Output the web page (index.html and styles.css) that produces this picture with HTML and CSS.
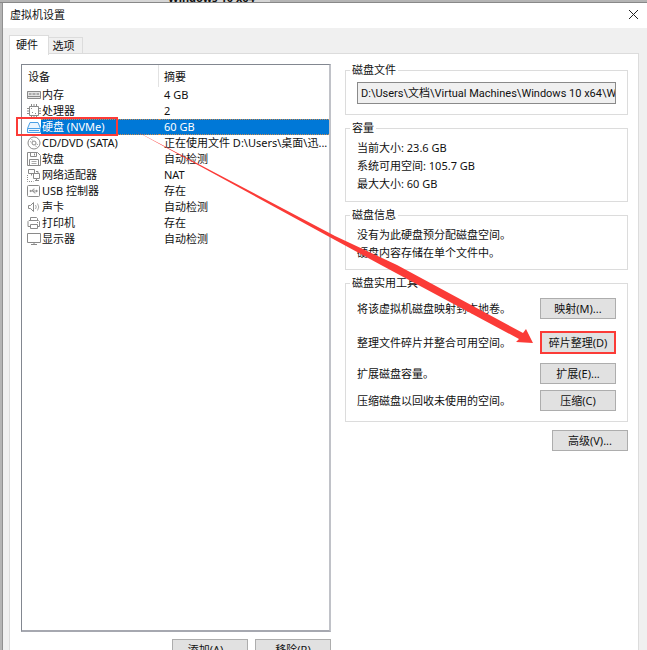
FILE: index.html
```html
<!DOCTYPE html>
<html lang="zh-CN">
<head>
<meta charset="utf-8">
<title>虚拟机设置</title>
<link rel="stylesheet" href="styles.css">
</head>
<body>
<div class="desktop">
  <div class="backdrop" aria-hidden="true"><span class="backdrop-tab">Windows 10 x64</span></div>
  <main class="dialog">
    <header class="titlebar">
      <h1>虚拟机设置</h1>
      <button class="close" type="button" aria-label="关闭">
        <svg width="11" height="11" viewBox="0 0 11 11"><path d="M1 1l9 9M10 1l-9 9"/></svg>
      </button>
    </header>
    <div class="tabs" role="tablist">
      <button class="tab active" type="button" role="tab" aria-selected="true">硬件</button>
      <button class="tab" type="button" role="tab" aria-selected="false">选项</button>
    </div>
    <section class="panel">
      <div class="left">
        <div class="list">
          <table>
            <thead><tr><th class="name">设备</th><th>摘要</th></tr></thead>
            <tbody>
              <tr><td><div class="device"><svg viewBox="0 0 14 14"><path class="fill" d="M0 3h14v7h-14z"/><path d="M.5 3.5h13v7h-13zM.5 8.500h13"/><path class="light" d="M2 5.500h2.500M5.500 5.500h3M9.500 5.500h2.500M2 6.500h2.500M5.500 6.500h3M9.500 6.500h2.500"/></svg><span>内存</span></div></td><td>4 GB</td></tr>
              <tr><td><div class="device"><svg viewBox="0 0 14 14"><path d="M2.5 2.5h9v9h-9zM4.5 0v2M7 0v2M9.500 0v2M4.500 12v2M7 12v2M9.500 12v2M0 4.500h2M0 7h2M0 9.500h2M12 4.500h2M12 7h2M12 9.500h2"/><path d="M4 4.500h1M5 8.500h1M8 9.500h1"/></svg><span>处理器</span></div></td><td>2</td></tr>
              <tr class="selected"><td><div class="device"><svg viewBox="0 0 14 14"><path class="disk" d="M3 2.500h8l2.500 6v4h-13v-4z"/><path class="disk-line" d="M.5 8.500h13M2 10.500h10"/></svg><span>硬盘 (NVMe)</span><i class="mark"></i></div></td><td>60 GB</td></tr>
              <tr><td><div class="device"><svg viewBox="0 0 14 14"><circle cx="7" cy="7" r="6"/><circle cx="7" cy="7" r="2"/><path class="light" d="M3 5.500l1.500.7M9.500 8l1.500.7M4.500 3l1 1.500M8.500 9.500l1 1.500"/></svg><span>CD/DVD (SATA)</span></div></td><td>正在使用文件 D:\Users\桌面\迅...</td></tr>
              <tr><td><div class="device"><svg viewBox="0 0 14 14"><path d="M.5.5h10l3 3v10h-13zM3.500 .5v4h6v-4M7.500 1.500v2M2.500 13.500v-6h9v6"/><path class="light" d="M4.500 9.500h5M4.500 11.500h5"/></svg><span>软盘</span></div></td><td>自动检测</td></tr>
              <tr><td><div class="device"><svg viewBox="0 0 14 14"><path d="M1.500 1.500h6v4h-6zM4.500 5.500v2M6.500 5.500h6v5h-6zM8 12.500h4M9.500 10.500v2M9 3.500h2v2"/><path class="dotted" d="M.5 7v6.500h6"/></svg><span>网络适配器</span></div></td><td>NAT</td></tr>
              <tr><td><div class="device"><svg viewBox="0 0 14 14"><rect x=".5" y="1.500" width="12" height="11" rx="1"/><path d="M3 7h7M5 7l1.500-2h1M6 7l1.500 2h1M9 6l1.500 1l-1.500 1"/><circle cx="3.500" cy="7" r=".6"/></svg><span>USB 控制器</span></div></td><td>存在</td></tr>
              <tr><td><div class="device"><svg viewBox="0 0 14 14"><path d="M1.500 5.500h2l3-3v9l-3-3h-2z"/><path class="light" d="M8.500 5q1.500 2 0 4M10.500 3.500q2.500 3.500 0 7"/></svg><span>声卡</span></div></td><td>自动检测</td></tr>
              <tr><td><div class="device"><svg viewBox="0 0 14 14"><path d="M3.500 4.500v-3h6l1 1v2M3.500 10.500h-2.500v-5l1-1h9.500l1 1v5h-2M3.500 8.500h7v4h-7zM10 6.500h1"/></svg><span>打印机</span></div></td><td>存在</td></tr>
              <tr><td><div class="device"><svg viewBox="0 0 14 14"><path d="M.5 1.500h13v9h-13zM4 12.500h6M7 10.500v2"/></svg><span>显示器</span></div></td><td>自动检测</td></tr>
            </tbody>
          </table>
        </div>
        <div class="list-actions">
          <button class="btn" type="button">添加(A)...</button>
          <button class="btn" type="button">移除(R)</button>
        </div>
      </div>
      <div class="right">
        <fieldset class="file">
          <legend>磁盘文件</legend>
          <input type="text" readonly aria-label="磁盘文件" value="D:\Users\文档\Virtual Machines\Windows 10 x64\Windows 10 x64.vmdk">
        </fieldset>
        <fieldset class="lines capacity">
          <legend>容量</legend>
          <p>当前大小: 23.6 GB</p>
          <p>系统可用空间: 105.7 GB</p>
          <p>最大大小: 60 GB</p>
        </fieldset>
        <fieldset class="lines">
          <legend>磁盘信息</legend>
          <p>没有为此硬盘预分配磁盘空间。</p>
          <p>硬盘内容存储在单个文件中。</p>
        </fieldset>
        <fieldset>
          <legend>磁盘实用工具</legend>
          <div class="tools">
            <span>将该虚拟机磁盘映射到本地卷。</span><button class="btn" type="button">映射(M)...</button>
            <span>整理文件碎片并整合可用空间。</span><button class="btn marked" type="button">碎片整理(D)</button>
            <span>扩展磁盘容量。</span><button class="btn" type="button">扩展(E)...</button>
            <span>压缩磁盘以回收未使用的空间。</span><button class="btn" type="button">压缩(C)</button>
          </div>
        </fieldset>
        <button class="btn advanced" type="button">高级(V)...</button>
      </div>
    </section>
  </main>
  <svg class="arrow" width="647" height="650" viewBox="0 0 647 650" aria-hidden="true"><path d="M132 129L335 236L397 265L523 333L526 329L533 343L516 342L519 339L381 265L335 240Z"/></svg>
</div>
</body>
</html>
```
FILE: styles.css
```css
* { box-sizing: border-box; }
body {
  margin: 0;
  height: 100vh;
  overflow: hidden;
  background: #f0f0f0;
  color: #111;
  font: 11px/16px "Noto Sans", "Noto Sans CJK SC", sans-serif;
}
button, input { font: inherit; color: inherit; }
h1, p { margin: 0; font-size: 11px; font-weight: 400; }

.desktop { position: relative; background: #b4b4b4; }
.backdrop {
  display: flex;
  align-items: flex-end;
  height: 3px;
  padding-left: 70px;
  overflow: hidden;
  border-bottom: 1px solid #888;
}
.backdrop-tab {
  width: 200px;
  padding-left: 98px;
  background: #d6d6d6;
  font-weight: 700;
  line-height: 9px;
  white-space: nowrap;
}
.dialog {
  display: flex;
  flex-direction: column;
  height: calc(100vh + 20px);
  margin-left: 2px;
  border-left: 1px solid #909090;
  background: #f0f0f0;
}
.titlebar {
  display: flex;
  align-items: center;
  justify-content: space-between;
  height: 25px;
  padding: 0 8px 2px 7px;
  background: #fff;
}
.close {
  display: flex;
  padding: 0;
  border: 0;
  background: none;
}
.close svg { fill: none; stroke: #222; stroke-width: 1; }

.tabs {
  display: flex;
  align-items: flex-end;
  height: 26px;
  padding-left: 6px;
}
.tab {
  height: 17px;
  width: 34px;
  padding: 0 4px 0 0;
  border: 1px solid #dcdcdc;
  border-left: 0;
  border-bottom: 0;
  background: #f0f0f0;
}
.tab.active {
  z-index: 1;
  height: 20px;
  width: 40px;
  margin-bottom: -1px;
  padding: 0 4px 2px 0;
  border-left: 1px solid #dcdcdc;
  background: #fff;
}
.panel {
  display: flex;
  flex: 1;
  gap: 14px;
  min-height: 0;
  margin: -1px 8px 0 6px;
  padding: 10px 10px 0 11px;
  border: 1px solid #dcdcdc;
  background: #fff;
}
.left {
  display: flex;
  flex: 310 1 0;
  flex-direction: column;
  gap: 7px;
  min-width: 0;
}
.list {
  flex: none;
  height: calc(100vh - 82px);
  border: 1px solid #828790;
  border-right: 2px solid #c0c2c8;
  border-bottom: 2px solid #a6a8b0;
}
.list-actions {
  display: flex;
  justify-content: flex-end;
  gap: 7px;
}

table { width: 100%; border-spacing: 0; table-layout: fixed; }
th, td { padding: 0 0 0 6px; font-weight: 400; text-align: left; white-space: nowrap; }
th { height: 22px; padding-top: 2px; }
th.name { width: 137px; border-right: 1px solid #e2e2e2; }
td { height: 16px; }
td:first-child { padding-left: 5px; }
td + td { padding-left: 5px; }
th + th { padding-left: 5px; }
.device { position: relative; display: flex; align-items: center; height: 16px; }
.device svg {
  flex: none;
  width: 14px;
  height: 14px;
  fill: none;
  stroke: #8a8a8a;
  stroke-width: 1;
}
.device span { flex: 1; padding-left: 1px; }
.device .fill { fill: #e4e4e4; stroke: none; }
.device .light { stroke: #aaa; }
.device .dotted { stroke-dasharray: 1 1; }
.device .disk { fill: #eaf5ff; stroke: #4aa0e6; }
.device .disk-line { stroke: #4aa0e6; }
.selected { color: #fff; }
.selected span, .selected td + td {
  border: 1px dotted #c88a50;
  border-width: 1px 0;
  background: #0078d7;
  line-height: 14px;
}
.mark {
  position: absolute;
  top: -2px;
  left: -11px;
  width: 102px;
  height: 19px;
  border: 2px solid #fb3b37;
}

.right { display: flex; flex: 283 1 0; flex-direction: column; gap: 5px; min-width: 0; margin-top: -2px; }
fieldset {
  min-width: 0;
  margin: 0;
  padding: 0 11px 10px;
  border: 1px solid #dcdcdc;
}
legend { margin-left: -7px; padding: 0 2px; }
.file input {
  display: block;
  width: 100%;
  height: 22px;
  margin-top: 4px;
  padding: 0 0 2px 3px;
  border: 1px solid #8a8a8a;
  background: #f0f0f0;
  font-family: Roboto, "Noto Sans CJK SC", sans-serif;
}
.lines { padding-top: 3px; padding-bottom: 7px; line-height: 18px; }
.lines legend { line-height: 16px; }
.capacity { padding-bottom: 8px; }
.tools {
  display: grid;
  grid-template-columns: 1fr 76px;
  grid-template-rows: 34px 31px 27px 21px;
  padding-top: 7px;
  line-height: 21px;
  white-space: nowrap;
}
.btn {
  width: 76px;
  height: 21px;
  padding: 0;
  border: 1px solid #adadad;
  background: #e1e1e1;
  line-height: 16px;
}
.marked { height: 23px; margin-top: -1px; border: 2px solid #fb3b37; }
.advanced { align-self: flex-end; margin-top: 3px; }
.arrow { position: absolute; top: 0; left: 0; fill: #fb3b37; pointer-events: none; }
```
